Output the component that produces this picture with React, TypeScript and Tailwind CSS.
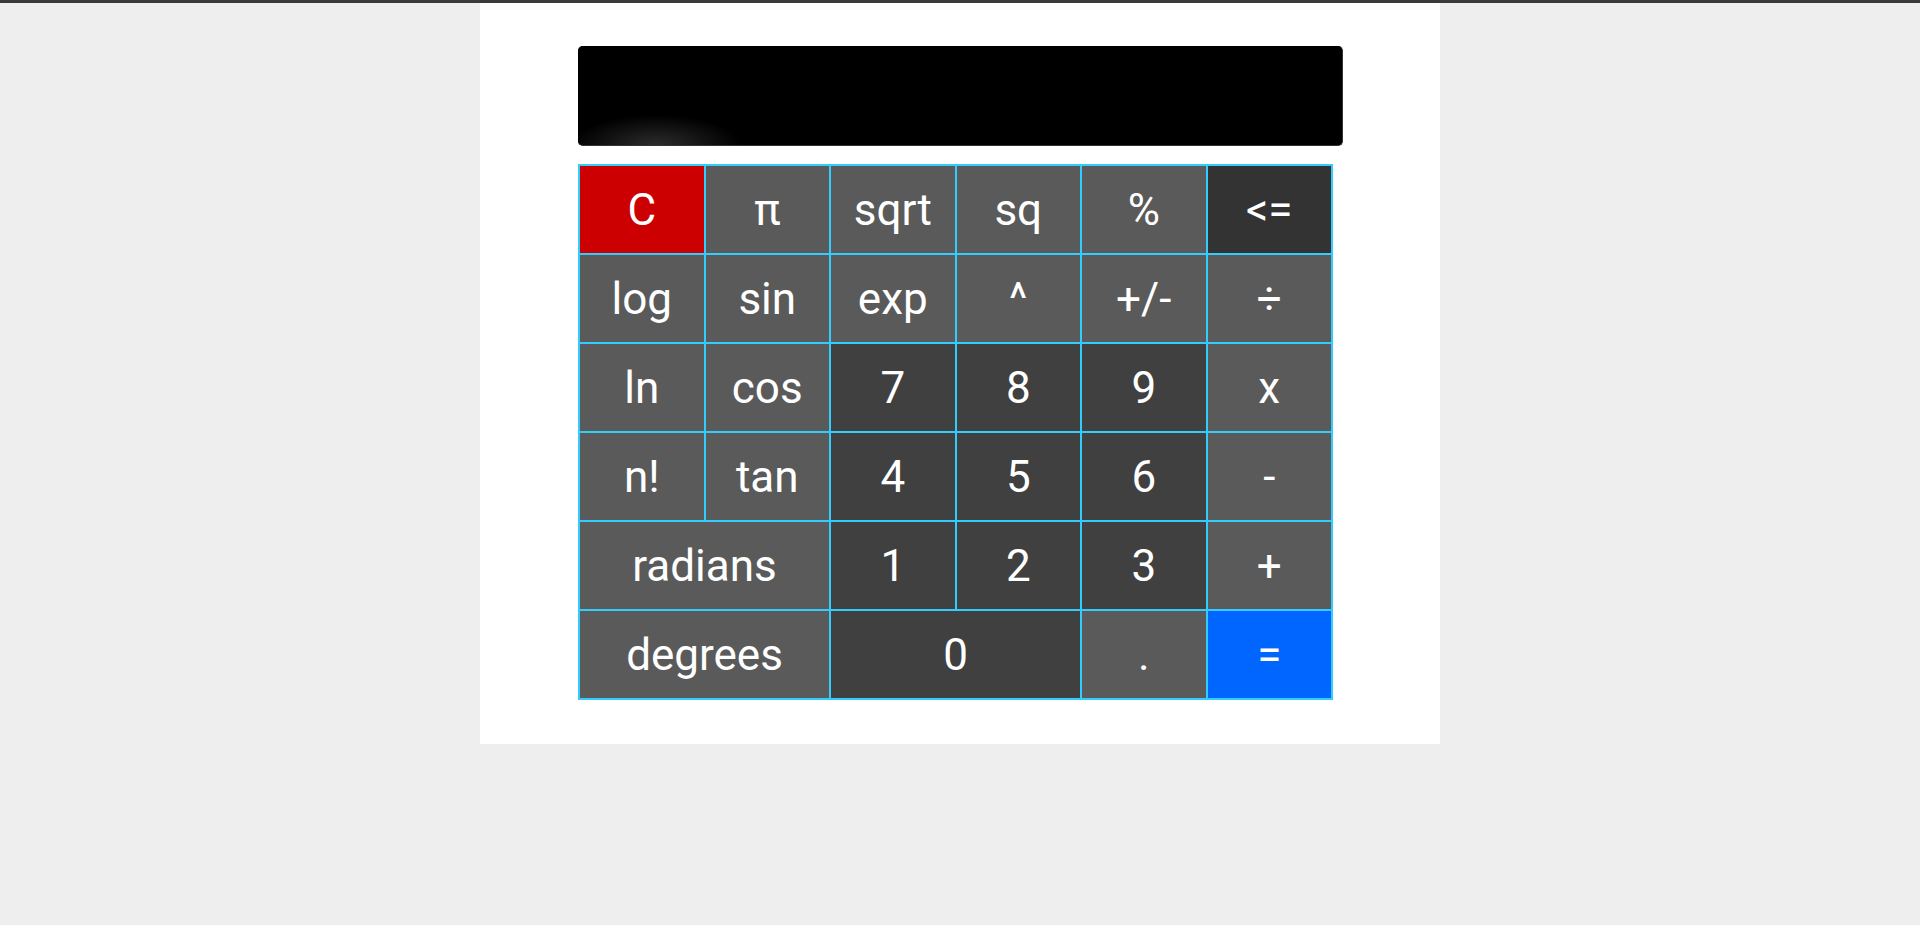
import React from "react";

type Key = { label: string; tone: "fn" | "num" | "clear" | "back" | "eq"; span?: number };

const tones: Record<Key["tone"], string> = {
  fn: "bg-[#5a5a5a]",
  num: "bg-[#404040]",
  clear: "bg-[#cc0000]",
  back: "bg-[#333333]",
  eq: "bg-[#0066ff]",
};

const keys: Key[] = [
  { label: "C", tone: "clear" },
  { label: "π", tone: "fn" },
  { label: "sqrt", tone: "fn" },
  { label: "sq", tone: "fn" },
  { label: "%", tone: "fn" },
  { label: "<=", tone: "back" },

  { label: "log", tone: "fn" },
  { label: "sin", tone: "fn" },
  { label: "exp", tone: "fn" },
  { label: "^", tone: "fn" },
  { label: "+/-", tone: "fn" },
  { label: "÷", tone: "fn" },

  { label: "ln", tone: "fn" },
  { label: "cos", tone: "fn" },
  { label: "7", tone: "num" },
  { label: "8", tone: "num" },
  { label: "9", tone: "num" },
  { label: "x", tone: "fn" },

  { label: "n!", tone: "fn" },
  { label: "tan", tone: "fn" },
  { label: "4", tone: "num" },
  { label: "5", tone: "num" },
  { label: "6", tone: "num" },
  { label: "-", tone: "fn" },

  { label: "radians", tone: "fn", span: 2 },
  { label: "1", tone: "num" },
  { label: "2", tone: "num" },
  { label: "3", tone: "num" },
  { label: "+", tone: "fn" },

  { label: "degrees", tone: "fn", span: 2 },
  { label: "0", tone: "num", span: 2 },
  { label: ".", tone: "fn" },
  { label: "=", tone: "eq" },
];

export default function App() {
  return (
    <div className="min-h-[925px] bg-[#eeeeee] border-t-[3px] border-[#3a3a3a] font-['Roboto','Liberation_Sans',sans-serif]">
      <div className="w-[960px] mx-auto bg-white pt-[43px] pb-[44px] px-[98px]">
        {/* display */}
        <div className="h-[100px] w-[765px] rounded-[5px] bg-black border-r border-b border-[#333333] bg-[radial-gradient(ellipse_85px_30px_at_78px_100%,#2c2c2c,#000000)]" />

        {/* keypad */}
        <div className="mt-[18px] w-[755px] grid grid-cols-6 grid-rows-[repeat(6,89px)] border border-[#33ccff]">
          {keys.map((k, i) => (
            <button
              key={i}
              className={`${tones[k.tone]} ${k.span === 2 ? "col-span-2" : ""} border-[0.5px] border-[#33ccff] text-white text-[44px] leading-none flex items-center justify-center`}
            >
              {k.label}
            </button>
          ))}
        </div>
      </div>
    </div>
  );
}
